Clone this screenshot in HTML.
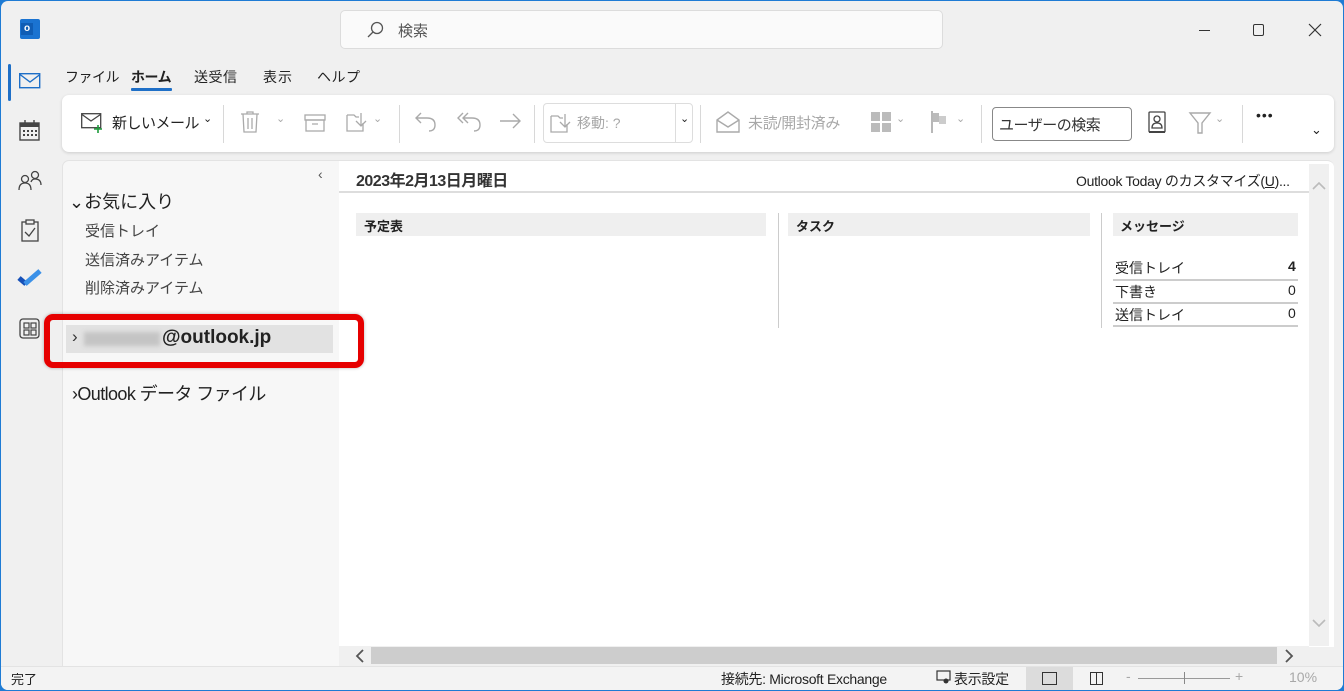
<!DOCTYPE html>
<html><head><meta charset="utf-8"><style>
*{box-sizing:border-box;margin:0;padding:0}
body{width:1344px;height:691px;overflow:hidden;background:#1e7bd4;font-family:"Liberation Sans","Noto Sans CJK JP",sans-serif;color:#222;position:relative}
.win{position:absolute;left:1px;top:1px;right:1px;bottom:1px;background:#f0f0f0;border-radius:7px;overflow:hidden}
.a{position:absolute}
.t{position:absolute;white-space:nowrap}
svg{position:absolute;overflow:visible}
.g{color:#a8a8a8}
.sep{position:absolute;width:1px;background:#d8d8d8}
</style></head><body><div class="win">
<div class="a" style="left:19px;top:18px;width:20px;height:20px;background:#1a73d1;border-radius:2px"></div>
<div class="a" style="left:20px;top:22px;width:12px;height:12px;background:#0f5db5;color:#fff;font-size:10px;font-weight:bold;text-align:center;line-height:12px">o</div>
<div class="a" style="left:339px;top:9px;width:603px;height:39px;background:#fafafa;border:1px solid #dcdcdc;border-radius:5px"></div>
<svg style="left:365px;top:20px" width="18" height="18"><circle cx="11" cy="7" r="5.5" fill="none" stroke="#555" stroke-width="1.3"/><path d="M7 11 L2 16" stroke="#555" stroke-width="1.3"/></svg>
<div class="t" style="left:397px;top:19px;font-size:15px;color:#555">検索</div>
<div class="a" style="left:1198px;top:29px;width:11px;height:1px;background:#333"></div>
<div class="a" style="left:1252px;top:23px;width:11px;height:12px;border:1.3px solid #333;border-radius:2px"></div>
<svg style="left:1307px;top:22px" width="14" height="14"><path d="M1 1L13 13M13 1L1 13" stroke="#333" stroke-width="1.2"/></svg>
<div class="a" style="left:7px;top:63px;width:3px;height:37px;background:#1e6fc7;border-radius:2px"></div>
<svg style="left:18px;top:72px" width="22" height="16"><rect x="0.7" y="0.7" width="20" height="14" fill="none" stroke="#1e6fc7" stroke-width="1.4"/><path d="M1 1.5L11 9L21 1.5" fill="none" stroke="#1e6fc7" stroke-width="1.4"/></svg>
<svg style="left:18px;top:119px" width="22" height="22"><rect x="1" y="3" width="19" height="17" fill="none" stroke="#444" stroke-width="1.4"/><rect x="1" y="3" width="19" height="4" fill="#444"/><path d="M6 0V4M15 0V4" stroke="#444" stroke-width="1.4"/><g fill="#444"><rect x="4" y="10" width="2" height="2"/><rect x="8" y="10" width="2" height="2"/><rect x="12" y="10" width="2" height="2"/><rect x="16" y="10" width="2" height="2"/><rect x="4" y="14" width="2" height="2"/><rect x="8" y="14" width="2" height="2"/><rect x="12" y="14" width="2" height="2"/><rect x="16" y="14" width="2" height="2"/></g></svg>
<svg style="left:17px;top:169px" width="24" height="22"><circle cx="7" cy="9" r="3.5" fill="none" stroke="#444" stroke-width="1.3"/><path d="M1 20Q1 13 7 13Q13 13 13 20" fill="none" stroke="#444" stroke-width="1.3"/><circle cx="17" cy="5" r="3.5" fill="none" stroke="#444" stroke-width="1.3"/><path d="M13 12Q14 9 17 9Q23 9 23 15" fill="none" stroke="#444" stroke-width="1.3"/></svg>
<svg style="left:20px;top:218px" width="18" height="24"><rect x="1" y="3" width="16" height="19" fill="none" stroke="#444" stroke-width="1.3"/><rect x="5" y="1" width="8" height="4" fill="#f0f0f0" stroke="#444" stroke-width="1.3"/><path d="M4 13L8 17L14 9" fill="none" stroke="#444" stroke-width="1.3"/></svg>
<svg style="left:17px;top:268px" width="24" height="20"><path d="M1 9L8 15" stroke="#1650b8" stroke-width="5"/><path d="M7 15L22 2" stroke="#3b91e8" stroke-width="5"/></svg>
<svg style="left:18px;top:317px" width="22" height="22"><rect x="1" y="1" width="19" height="19" rx="3" fill="none" stroke="#444" stroke-width="1.3"/><rect x="5" y="5" width="5" height="5" fill="none" stroke="#444" stroke-width="1.2"/><rect x="12" y="5" width="5" height="5" fill="none" stroke="#444" stroke-width="1.2"/><rect x="5" y="12" width="5" height="5" fill="none" stroke="#444" stroke-width="1.2"/><rect x="12" y="12" width="5" height="5" fill="none" stroke="#444" stroke-width="1.2"/></svg>
<div class="t" style="left:64px;top:66px;font-size:14px;letter-spacing:-0.5px">ファイル</div>
<div class="t" style="left:130px;top:66px;font-size:14px;font-weight:bold;letter-spacing:-0.5px">ホーム</div>
<div class="a" style="left:130px;top:87px;width:41px;height:3px;background:#1e6fc7;border-radius:1px"></div>
<div class="t" style="left:193px;top:66px;font-size:14px;letter-spacing:0.5px">送受信</div>
<div class="t" style="left:262px;top:66px;font-size:14px;letter-spacing:1px">表示</div>
<div class="t" style="left:316px;top:66px;font-size:14px;letter-spacing:0.5px">ヘルプ</div>
<div class="a" style="left:61px;top:94px;width:1272px;height:57px;background:#fff;border-radius:7px;box-shadow:0 1px 3px rgba(0,0,0,.15)"></div>
<svg style="left:80px;top:112px" width="24" height="22"><rect x="0.7" y="0.7" width="19" height="14" fill="none" stroke="#444" stroke-width="1.3"/><path d="M1 1.5L10 8L19.5 1.5" fill="none" stroke="#444" stroke-width="1.3"/><path d="M13 16H21M17 12V20" stroke="#1d9b3b" stroke-width="1.6"/></svg>
<div class="t" style="left:111px;top:111px;font-size:15px;letter-spacing:-0.5px">新しいメール</div>
<div class="t" style="left:202px;top:111px;font-size:11px">⌄</div>
<div class="sep" style="left:222px;top:104px;height:38px"></div>
<svg style="left:239px;top:110px" width="20" height="22"><path d="M1 3H19M7 3V1H13V3M3 3L4 21H16L17 3M8 7V18M12 7V18" fill="none" stroke="#aaa" stroke-width="1.3"/></svg>
<div class="t g" style="left:275px;top:111px;font-size:11px">⌄</div>
<svg style="left:303px;top:113px" width="22" height="18"><rect x="1" y="1" width="20" height="5" fill="none" stroke="#aaa" stroke-width="1.3"/><rect x="2" y="6" width="18" height="11" fill="none" stroke="#aaa" stroke-width="1.3"/><path d="M8 10H14" stroke="#aaa" stroke-width="1.3"/></svg>
<svg style="left:345px;top:111px" width="22" height="20"><path d="M1 3H8L10 5H13M1 3V19H17V11" fill="none" stroke="#aaa" stroke-width="1.3"/><path d="M15 1V14M10 9L15 14L20 9" fill="none" stroke="#aaa" stroke-width="1.3"/></svg>
<div class="t g" style="left:372px;top:111px;font-size:11px">⌄</div>
<div class="sep" style="left:398px;top:104px;height:38px"></div>
<svg style="left:414px;top:110px" width="22" height="22"><path d="M6 2L1 7L6 12M1 7H12Q20 7 20 14Q20 20 14 20" fill="none" stroke="#aaa" stroke-width="1.4"/></svg>
<svg style="left:456px;top:110px" width="26" height="22"><path d="M6 2L1 7L6 12M11 2L6 7L11 12M6 7H15Q23 7 23 14Q23 20 17 20" fill="none" stroke="#aaa" stroke-width="1.4"/></svg>
<svg style="left:498px;top:111px" width="24" height="18"><path d="M1 9H21M14 2L21 9L14 16" fill="none" stroke="#aaa" stroke-width="1.4"/></svg>
<div class="sep" style="left:533px;top:104px;height:38px"></div>
<div class="a" style="left:542px;top:102px;width:150px;height:40px;border:1px solid #ddd;border-radius:4px"></div>
<div class="a" style="left:674px;top:102px;width:1px;height:40px;background:#ddd"></div>
<svg style="left:549px;top:112px" width="22" height="20"><path d="M1 3H8L10 5H13M1 3V19H17V11" fill="none" stroke="#aaa" stroke-width="1.3"/><path d="M15 1V14M10 9L15 14L20 9" fill="none" stroke="#aaa" stroke-width="1.3"/></svg>
<div class="t g" style="left:576px;top:112px;font-size:14px">移動: ?</div>
<div class="t" style="left:679px;top:111px;font-size:11px">⌄</div>
<div class="sep" style="left:699px;top:104px;height:38px"></div>
<svg style="left:715px;top:110px" width="24" height="22"><path d="M1 9L12 1L23 9V21H1Z" fill="none" stroke="#aaa" stroke-width="1.4"/><path d="M1 9L12 16L23 9" fill="none" stroke="#aaa" stroke-width="1.4"/></svg>
<div class="t g" style="left:747px;top:111px;font-size:15px;letter-spacing:-0.3px">未読/開封済み</div>
<svg style="left:870px;top:111px" width="22" height="22"><g fill="#bbb"><rect x="0" y="0" width="9" height="9"/><rect x="11" y="0" width="9" height="9"/><rect x="0" y="11" width="9" height="9"/><rect x="11" y="11" width="9" height="9"/></g></svg>
<div class="t g" style="left:895px;top:111px;font-size:11px">⌄</div>
<svg style="left:930px;top:110px" width="18" height="22"><path d="M1 0V22" stroke="#999" stroke-width="1.4"/><rect x="2" y="2" width="6" height="9" fill="#bbb"/><rect x="8" y="5" width="7" height="8" fill="#ccc"/></svg>
<div class="t g" style="left:955px;top:111px;font-size:11px">⌄</div>
<div class="sep" style="left:980px;top:104px;height:38px"></div>
<div class="a" style="left:991px;top:106px;width:140px;height:34px;border:1px solid #888;border-radius:4px"></div>
<div class="t" style="left:998px;top:113px;font-size:15px;color:#333;letter-spacing:-0.5px">ユーザーの検索</div>
<svg style="left:1147px;top:110px" width="18" height="24"><rect x="1" y="1" width="16" height="20" rx="1" fill="none" stroke="#444" stroke-width="1.3"/><circle cx="9" cy="8" r="3" fill="none" stroke="#444" stroke-width="1.3"/><path d="M4 17Q4 12 9 12Q14 12 14 17Z" fill="none" stroke="#444" stroke-width="1.3"/><path d="M1 21H17" stroke="#444" stroke-width="2"/></svg>
<svg style="left:1188px;top:111px" width="22" height="22"><path d="M1 1H21L13 11V21H9V11Z" fill="none" stroke="#aaa" stroke-width="1.4"/></svg>
<div class="t g" style="left:1214px;top:111px;font-size:11px">⌄</div>
<div class="sep" style="left:1241px;top:104px;height:38px"></div>
<div class="t" style="left:1255px;top:106px;font-size:14px;letter-spacing:1px">•••</div>
<div class="t" style="left:1310px;top:121px;font-size:13px">⌄</div>
<!-- folder pane -->
<div class="a" style="left:61px;top:159px;width:277px;height:510px;background:#f7f7f7;border-radius:7px 0 0 0;border-left:1px solid #e3e3e3;border-top:1px solid #e3e3e3"></div>
<div class="t" style="left:317px;top:165px;font-size:14px;color:#555">‹</div>
<div class="t" style="left:68px;top:187px;font-size:18px">⌄お気に入り</div>
<div class="t" style="left:84px;top:219px;font-size:15px;color:#444">受信トレイ</div>
<div class="t" style="left:84px;top:248px;font-size:15px;color:#444">送信済みアイテム</div>
<div class="t" style="left:84px;top:276px;font-size:15px;color:#444">削除済みアイテム</div>
<div class="a" style="left:65px;top:324px;width:267px;height:28px;background:#e2e2e2"></div>
<div class="t" style="left:71px;top:326px;font-size:17px;color:#333">›</div>
<div class="a" style="left:83px;top:331px;width:76px;height:14px;background:#c4c4c4;filter:blur(2px)"></div>
<div class="t" style="left:161px;top:326px;font-size:19px;font-weight:bold;color:#222">@outlook.jp</div>
<div class="t" style="left:71px;top:379px;font-size:18px;color:#222;letter-spacing:-0.6px">›Outlook データ ファイル</div>
<!-- content -->
<div class="a" style="left:338px;top:159px;width:995px;height:487px;background:#fff;border-radius:0 7px 0 0;border-top:1px solid #e3e3e3"></div>
<div class="t" style="left:355px;top:166px;font-size:16px;font-weight:bold;color:#333;letter-spacing:-0.5px">2023年2月13日月曜日</div>
<div class="t" style="left:1075px;top:170px;font-size:14px;color:#222;letter-spacing:-0.3px">Outlook Today のカスタマイズ(<u>U</u>)...</div>
<div class="a" style="left:338px;top:190px;width:970px;height:2px;background:#ddd"></div>
<div class="a" style="left:355px;top:212px;width:410px;height:23px;background:#efefef"></div>
<div class="t" style="left:363px;top:215px;font-size:13px;font-weight:bold">予定表</div>
<div class="a" style="left:777px;top:212px;width:1px;height:115px;background:#ccc"></div>
<div class="a" style="left:787px;top:212px;width:302px;height:23px;background:#efefef"></div>
<div class="t" style="left:795px;top:215px;font-size:13px;font-weight:bold">タスク</div>
<div class="a" style="left:1100px;top:212px;width:1px;height:115px;background:#ccc"></div>
<div class="a" style="left:1112px;top:212px;width:185px;height:23px;background:#efefef"></div>
<div class="t" style="left:1119px;top:215px;font-size:13px;font-weight:bold">メッセージ</div>
<div class="t" style="left:1114px;top:257px;font-size:14px">受信トレイ</div><div class="t" style="left:1287px;top:257px;font-size:14px;font-weight:bold">4</div>
<div class="a" style="left:1112px;top:278px;width:185px;height:2px;background:#ccc"></div>
<div class="t" style="left:1114px;top:281px;font-size:14px">下書き</div><div class="t" style="left:1287px;top:281px;font-size:14px">0</div>
<div class="a" style="left:1112px;top:301px;width:185px;height:2px;background:#ccc"></div>
<div class="t" style="left:1114px;top:304px;font-size:14px">送信トレイ</div><div class="t" style="left:1287px;top:304px;font-size:14px">0</div>
<div class="a" style="left:1112px;top:324px;width:185px;height:2px;background:#ccc"></div>
<!-- red box on top -->
<div class="a" style="left:43px;top:313px;width:320px;height:54px;border:6px solid #e60000;border-radius:9px;box-shadow:0 0 3px rgba(0,0,0,.3)"></div>
<div class="a" style="left:1308px;top:163px;width:20px;height:482px;background:#f0f0f0"></div>
<svg style="left:1311px;top:180px" width="14" height="10"><path d="M1 8L7 2L13 8" fill="none" stroke="#bbb" stroke-width="1.6"/></svg>
<svg style="left:1311px;top:617px" width="14" height="10"><path d="M1 2L7 8L13 2" fill="none" stroke="#bbb" stroke-width="1.6"/></svg>
<div class="a" style="left:338px;top:645px;width:970px;height:21px;background:#f0f0f0"></div>
<div class="a" style="left:370px;top:646px;width:906px;height:17px;background:#cdcdcd"></div>
<svg style="left:354px;top:648px" width="10" height="14"><path d="M8 1L2 7L8 13" fill="none" stroke="#555" stroke-width="1.8"/></svg>
<svg style="left:1283px;top:648px" width="10" height="14"><path d="M2 1L8 7L2 13" fill="none" stroke="#555" stroke-width="1.8"/></svg>
<div class="a" style="left:0;top:665px;width:1342px;height:25px;background:#f3f3f3;border-top:1px solid #e3e3e3"></div>
<div class="t" style="left:10px;top:668px;font-size:13px">完了</div>
<div class="t" style="left:720px;top:668px;font-size:14px;letter-spacing:-0.3px">接続先: Microsoft Exchange</div>
<svg style="left:935px;top:669px" width="16" height="14"><rect x="1" y="1" width="13" height="9" fill="none" stroke="#333" stroke-width="1.2"/><circle cx="10" cy="11" r="2.5" fill="#333"/></svg>
<div class="t" style="left:953px;top:668px;font-size:14px;letter-spacing:-0.3px">表示設定</div>
<div class="a" style="left:1025px;top:666px;width:47px;height:24px;background:#dcdcdc"></div>
<div class="a" style="left:1041px;top:671px;width:15px;height:13px;border:1.3px solid #333"></div>
<div class="a" style="left:1089px;top:671px;width:13px;height:13px;border:1.3px solid #333"></div>
<div class="a" style="left:1095px;top:671px;width:1px;height:13px;background:#333"></div>
<div class="t g" style="left:1125px;top:667px;font-size:14px">-</div>
<div class="a" style="left:1137px;top:677px;width:92px;height:1px;background:#999"></div>
<div class="a" style="left:1183px;top:671px;width:1px;height:12px;background:#888"></div>
<div class="t g" style="left:1234px;top:667px;font-size:14px">+</div>
<div class="t g" style="left:1288px;top:668px;font-size:14px">10%</div>
</div></body></html>
